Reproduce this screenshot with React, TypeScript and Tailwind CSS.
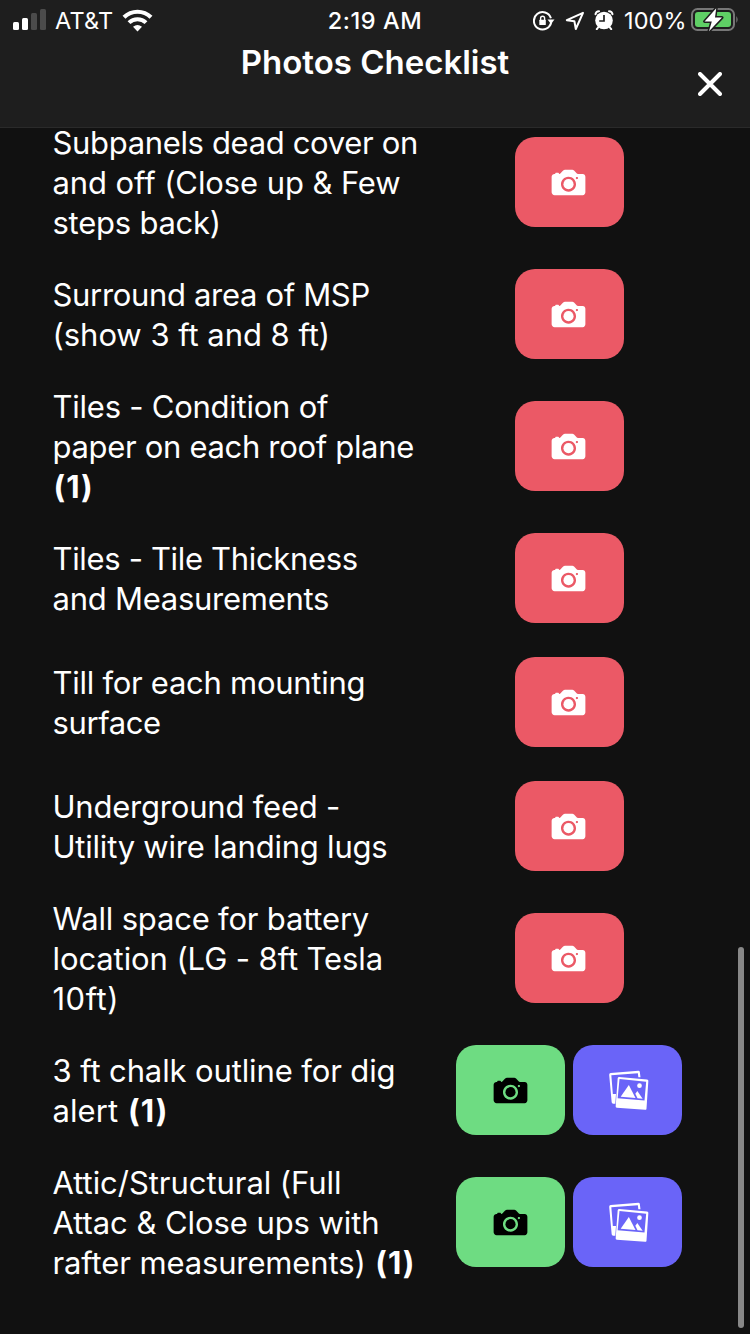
import React from "react";
import { IoIosCamera } from "react-icons/io";

type Line = { text: string; spacing: number; count?: string };
type Item = { lines: Line[]; done?: boolean };

const items: Item[] = [
  {
    lines: [
      { text: "Subpanels dead cover on", spacing: -0.34 },
      { text: "and off (Close up & Few", spacing: -0.1 },
      { text: "steps back)", spacing: -0.24 },
    ],
  },
  {
    lines: [
      { text: "Surround area of MSP", spacing: -0.33 },
      { text: "(show 3 ft and 8 ft)", spacing: -0.04 },
    ],
  },
  {
    lines: [
      { text: "Tiles - Condition of", spacing: -0.24 },
      { text: "paper on each roof plane", spacing: -0.32 },
      { text: "", spacing: 0, count: "(1)" },
    ],
  },
  {
    lines: [
      { text: "Tiles - Tile Thickness", spacing: -0.34 },
      { text: "and Measurements", spacing: -0.26 },
    ],
  },
  {
    lines: [
      { text: "Till for each mounting", spacing: -0.27 },
      { text: "surface", spacing: -0.4 },
    ],
  },
  {
    lines: [
      { text: "Underground feed -", spacing: -0.21 },
      { text: "Utility wire landing lugs", spacing: -0.22 },
    ],
  },
  {
    lines: [
      { text: "Wall space for battery", spacing: -0.19 },
      { text: "location (LG - 8ft Tesla", spacing: -0.1 },
      { text: "10ft)", spacing: 0.5 },
    ],
  },
  {
    done: true,
    lines: [
      { text: "3 ft chalk outline for dig", spacing: -0.12 },
      { text: "alert ", spacing: 0.1, count: "(1)" },
    ],
  },
  {
    done: true,
    lines: [
      { text: "Attic/Structural (Full", spacing: -0.05 },
      { text: "Attac & Close ups with", spacing: -0.07 },
      { text: "rafter measurements) ", spacing: -0.13, count: "(1)" },
    ],
  },
];

function StatusBar() {
  return (
    <div className="flex h-10 shrink-0 items-center justify-between pl-[13px] pr-[11px] text-[23.5px] leading-10">
      <div className="flex w-[280px] items-center">
        <svg width="33" height="22" viewBox="0 0 33 22" fill="#fff">
          <rect x="0" y="13" width="6" height="8" rx="1.5" />
          <rect x="9" y="9" width="6" height="12" rx="1.5" />
          <rect x="18" y="4" width="6" height="17" rx="1.5" fill="#4b4b4b" />
          <rect x="27" y="0" width="6" height="21" rx="1.5" fill="#4b4b4b" />
        </svg>
        <span className="ml-[9px] w-[58px] whitespace-nowrap pt-0.5 tracking-[0.2px]">AT&amp;T</span>
        <svg className="ml-[9px]" width="31" height="23" viewBox="0 0 31 23" fill="none" stroke="#fff">
          <path d="M2 8.2 A19.5 19.5 0 0 1 29 8.2" strokeWidth="4.2" />
          <path d="M7 13.6 A12.2 12.2 0 0 1 24 13.6" strokeWidth="4" />
          <path d="M15.5 22.5 L11 17.8 Q15.5 14.2 20 17.8 Z" fill="#fff" stroke="none" />
        </svg>
      </div>
      <span className="whitespace-nowrap pr-0.5 pt-0.5 font-medium tracking-[0.6px]">2:19 AM</span>
      <div className="flex w-[280px] items-center justify-end">
        <svg className="mt-0.5" width="22" height="20" viewBox="0 0 22 20" fill="none">
          <path d="M18.2 11.2 A8.7 8.7 0 1 1 17.9 7.2 M18.2 11.2 A8.7 8.7 0 0 1 16 15.6" stroke="#fff" strokeWidth="2" />
          <path d="M14.5 8.6 H21.5 L18 13 Z" fill="#fff" />
          <rect x="6.3" y="8.7" width="6.5" height="5.3" rx="0.6" fill="#fff" />
          <path d="M7.6 9 V7.2 A2 2 0 0 1 11.6 7.2 V9" stroke="#fff" strokeWidth="1.4" />
        </svg>
        <svg className="ml-[10px] mt-0.5" width="20" height="20" viewBox="0 0 20 20" fill="none">
          <path d="M18 1.8 L1.8 9.2 L9.4 10.2 L10.8 18 Z" stroke="#fff" strokeWidth="2" strokeLinejoin="round" />
        </svg>
        <svg className="ml-[9px]" width="20" height="20" viewBox="0 0 20 20" fill="none">
          <circle cx="10" cy="10.5" r="8.8" fill="#fff" />
          <path d="M1.5 4.2 Q2 1.2 5 1.2 M18.5 4.2 Q18 1.2 15 1.2" stroke="#fff" strokeWidth="2" strokeLinecap="round" />
          <path d="M4.5 17 L2.8 19.2 M15.5 17 L17.2 19.2" stroke="#fff" strokeWidth="2" strokeLinecap="round" />
          <path d="M10 5 V11 H5.2" stroke="#1e1e1e" strokeWidth="1.7" />
        </svg>
        <span className="ml-[10px] w-[62px] whitespace-nowrap pt-0.5 tracking-[0.1px]">100%</span>
        <svg className="ml-[5px]" width="48" height="24" viewBox="0 0 48 24" fill="none">
          <rect x="1" y="1" width="42" height="21" rx="5.5" stroke="#777" strokeWidth="2" />
          <rect x="4" y="4" width="36" height="15" rx="3" fill="#5fcf65" />
          <path d="M45.3 8 Q48 11.5 45.3 15 Z" fill="#777" />
          <path d="M25.2 0.2 L13.6 13.4 H20.8 L18 23.2 L31 9.6 H24 Z" fill="#fff" stroke="#1e1e1e" strokeWidth="3" strokeLinejoin="round" paintOrder="stroke" />
        </svg>
      </div>
    </div>
  );
}

function Header() {
  return (
    <header className="relative z-10 flex h-32 shrink-0 flex-col border-b border-[#2a2a2a] bg-[#1e1e1e]">
      <StatusBar />
      <div className="grid grid-cols-[80px_1fr_80px]">
        <h1 className="col-start-2 text-center text-[33px] font-semibold leading-[44px]">Photos Checklist</h1>
        <button aria-label="Close" className="flex items-start justify-center pt-8">
          <svg width="24" height="24" viewBox="0 0 24 24" stroke="#fff" strokeWidth="4" strokeLinecap="round">
            <path d="M2 2 L22 22 M22 2 L2 22" />
          </svg>
        </button>
      </div>
    </header>
  );
}

function PhotosIcon() {
  return (
    <svg width="42" height="42" viewBox="0 0 126 126" fill="#fff">
      <path
        fillRule="evenodd"
        d="M11 12 L94 5.5 Q98 5.5 98.5 9 L100.5 25 L94 24.5 L92.5 12.5 L13 19 L17.5 75 H27 L25 104 H18.5 Q14.5 104 14 100 L6.5 17.5 Q6.5 12.5 11 12 Z"
      />
      <path
        fillRule="evenodd"
        d="M36.5 24 L120 31.5 Q124.5 32 124 36 L118.5 119 Q118 123 114 122.5 L29.5 116 Q25.5 115.5 26 111.5 L32 27.5 Q32.5 24 36.5 24 Z M37.5 30 L32 87.5 L112.500 94.5 L117.5 38 Z"
      />
      <path d="M65.5 48 L85.5 87 L41 83 Z" />
      <path d="M91 66 L107 89 L91.5 87.5 L85 74 Z" />
      <circle cx="97.5" cy="50" r="7" />
    </svg>
  );
}

function Row({ item }: { item: Item }) {
  return (
    <li className="flex items-center">
      <p className="w-[403.5px] shrink-0 pb-[9px] pt-[11px] text-[31px] leading-10">
        {item.lines.map((line, i) => (
          <span key={i} className="block whitespace-pre" style={{ letterSpacing: line.spacing }}>
            {line.text}
            {line.count && <b className="ml-px font-bold tracking-[1px]">{line.count}</b>}
          </span>
        ))}
      </p>
      <div className="flex w-[226px] justify-center gap-2 py-[17px]">
        <button
          aria-label="Take photo"
          className={
            item.done
              ? "flex h-[90px] w-[109px] items-center justify-center rounded-[20px] bg-[#6edc82] pr-px pt-px text-black"
              : "flex h-[90px] w-[109px] items-center justify-center rounded-[20px] bg-[#eb5966] pr-0.5 pt-px text-white"
          }
        >
          <IoIosCamera size={45} />
        </button>
        {item.done && (
          <button aria-label="View photos" className="flex h-[90px] w-[109px] items-center justify-center rounded-[20px] bg-[#6a64f8]">
            <PhotosIcon />
          </button>
        )}
      </div>
    </li>
  );
}

export default function App() {
  return (
    <div className="relative flex h-[1334px] w-[750px] flex-col overflow-hidden bg-[#111111] font-['Inter','Liberation_Sans',sans-serif] text-white">
      <Header />
      <ul className="-mt-4 flex flex-col pl-[52.5px]">
        {items.map((item, i) => (
          <Row key={i} item={item} />
        ))}
      </ul>
      <div className="absolute right-1.5 top-[947px] h-[381px] w-1.5 rounded-full bg-[#888888]" />
    </div>
  );
}
